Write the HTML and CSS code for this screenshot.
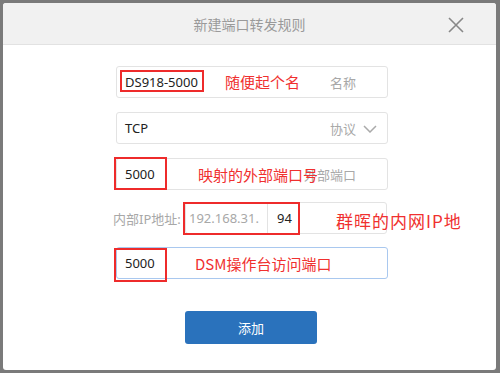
FILE: index.html
```html
<!DOCTYPE html>
<html>
<head>
 <title>新建端口转发规则</title>
 <link rel="stylesheet" href="styles.css">
</head>
<body>
 <!-- dialog window -->
 <div class="dialog">
  <div class="dialog-header">
   <span class="dialog-title">新建端口转发规则</span>
   <svg class="close-icon" width="16" height="16" viewBox="0 0 16 16"><path d="M1 1L15 15M15 1L1 15" stroke="#888" stroke-width="1.6" fill="none"/></svg>
  </div>
  <div class="dialog-body">
   <!-- name -->
   <div class="field">
    <span class="value">DS918-5000</span>
    <span class="hint">名称</span>
    <span class="mark mark-name"></span>
    <span class="note note-name">随便起个名</span>
   </div>
   <!-- protocol -->
   <div class="field">
    <span class="value">TCP</span>
    <span class="hint">协议</span>
    <svg class="chevron" width="14" height="8" viewBox="0 0 14 8"><path d="M1 1L7 7L13 1" stroke="#aaa" stroke-width="1.5" fill="none"/></svg>
   </div>
   <!-- outer port -->
   <div class="field">
    <span class="value">5000</span>
    <span class="hint">外部端口</span>
    <span class="mark mark-port"></span>
    <span class="note note-outer">映射的外部端口号</span>
   </div>
   <!-- inner ip -->
   <div class="ip-row">
    <span class="ip-label">内部IP地址:</span>
    <div class="ip-box">
     <span class="ip-prefix">192.168.31.</span>
     <span class="ip-last">94</span>
    </div>
    <span class="mark mark-ip"></span>
    <span class="note note-ip">群晖的内网IP地</span>
   </div>
   <!-- inner port -->
   <div class="field field-active">
    <span class="value">5000</span>
    <span class="mark mark-port2"></span>
    <span class="note note-inner">DSM操作台访问端口</span>
   </div>
   <button class="add-button">添加</button>
  </div>
 </div>
</body>
</html>
```

FILE: styles.css
```css
/* page behind the dialog */
body {
 margin: 0;
 width: 500px;
 height: 373px;
 background: #7a7a7a;
 font-family: "Noto Sans", "Noto Sans CJK SC", sans-serif;
 overflow: hidden;
}

/* dialog window */
.dialog {
 position: absolute;
 left: 3px;
 top: 3px;
 width: 493px;
 height: 367px;
 background: #fff;
 border-radius: 3px;
 overflow: hidden;
}
.dialog-header {
 height: 41px;
 background: #f1f1f1;
 border-bottom: 1px solid #e2e2e2;
 display: flex;
 align-items: center;
 justify-content: center;
 position: relative;
}
.dialog-title {
 font-size: 14px;
 color: #9a9a9a;
}
.close-icon {
 position: absolute;
 right: 32px;
 top: 14px;
}

/* form body */
.dialog-body {
 display: flex;
 flex-direction: column;
 align-items: flex-start;
 padding: 21px 0 0 113px;
}
.field {
 position: relative;
 width: 262px;
 height: 30px;
 border: 1px solid #e3e3e3;
 border-radius: 3px;
 display: flex;
 align-items: center;
 padding: 0 0 0 8px;
 box-sizing: content-box;
 margin-bottom: 14px;
 font-size: 13px;
 color: #222;
}
.field-active {
 border-color: #a9c8ef;
}
.value {
 flex: 1;
}
.hint {
 color: #a8a8a8;
 margin-right: 31px;
}
.chevron {
 position: absolute;
 right: 10px;
 top: 12px;
}

/* ip row */
.ip-row {
 position: relative;
 display: flex;
 align-items: center;
 height: 32px;
 margin: -2px 0 13px -3px;
 font-size: 13px;
}
.ip-label {
 color: #a8a8a8;
 width: 72px;
}
.ip-box {
 width: 200px;
 height: 30px;
 border: 1px solid #e3e3e3;
 border-radius: 3px;
 display: flex;
 align-items: center;
}
.ip-prefix {
 color: #a8a8a8;
 width: 78px;
 padding-left: 3px;
 height: 30px;
 line-height: 30px;
 border-right: 1px solid #e3e3e3;
}
.ip-last {
 padding-left: 9px;
 color: #222;
}

/* red annotations */
.mark {
 position: absolute;
 border: 2px solid #ee2b2b;
}
.mark-name { left: 3px; top: 3px; width: 80px; height: 18px; }
.mark-port { left: -3px; top: -2px; width: 49px; height: 29px; }
.mark-port2 { left: -3px; top: 0; width: 49px; height: 30px; }
.mark-ip { left: 70px; top: 0; width: 113px; height: 29px; }
.note {
 position: absolute;
 color: #f0302f;
 font-size: 15px;
 white-space: nowrap;
 font-family: "Noto Sans CJK SC", sans-serif;
}
.note-name { left: 108px; top: 4px; }
.note-outer { left: 81px; top: 5px; }
.note-ip { left: 223px; top: 6px; font-size: 17px; letter-spacing: 1px; }
.note-inner { left: 78px; top: 5px; }

/* submit */
.add-button {
 margin: 18px 0 0 69px;
 width: 132px;
 height: 33px;
 border: none;
 border-radius: 3px;
 background: #2a72bc;
 color: #fff;
 font-size: 13px;
 font-family: "Noto Sans CJK SC", sans-serif;
}
```
